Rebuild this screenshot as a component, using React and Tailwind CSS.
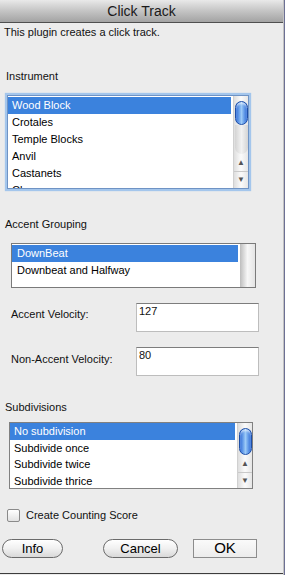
import React from "react";

const instruments = ["Wood Block", "Crotales", "Temple Blocks", "Anvil", "Castanets", "Claves"];
const groupings = ["DownBeat", "Downbeat and Halfway"];
const subdivisions = ["No subdivision", "Subdivide once", "Subdivide twice", "Subdivide thrice"];

const Thumb = ({ h }) => (
  <div
    className="mx-auto w-[13px] rounded-full border border-[#1d4fa8] bg-gradient-to-r from-[#2a68d6] via-[#9ccaf7] to-[#2a68d6] shadow-[inset_0_2px_2px_rgba(255,255,255,0.6)]"
    style={{ height: h }}
  />
);

const Arrows = () => (
  <div className="flex flex-col text-[#555]">
    <div className="h-[17px] flex items-center justify-center text-[8px] leading-none">▲</div>
    <div className="h-[17px] flex items-center justify-center text-[8px] leading-none border-t border-[#c9c9c9]">▼</div>
  </div>
);

const Scrollbar = ({ padTop, thumbH }) => (
  <div className="w-[15px] h-full flex flex-col border-l border-[#d0d0d0] bg-gradient-to-r from-[#dedede] via-[#fbfbfb] to-[#e6e6e6]">
    <div className="flex-1 flex flex-col" style={{ paddingTop: padTop }}>
      <Thumb h={thumbH} />
      <div className="mx-auto w-[13px] flex-1 rounded-b-full bg-gradient-to-r from-[#d4d4d4] via-[#f2f2f2] to-[#d4d4d4]" />
    </div>
    <Arrows />
  </div>
);

const Row = ({ label, selected, h, pl }) => (
  <div
    className={`flex items-center whitespace-nowrap ${selected ? "bg-[#3b82dd] text-white mr-[2px]" : "text-black"}`}
    style={{ height: h, paddingLeft: pl }}
  >
    {label}
  </div>
);

const VelocityRow = ({ label, value, labelTop }) => (
  <div className="flex items-start">
    <div className="w-[136px] pl-[11px] leading-[14px]" style={{ marginTop: labelTop }}>
      {label}
    </div>
    <div className="w-[123px] h-[29px] bg-white border border-[#bdbdbd] border-t-[#7d7d7d] pl-[2px] leading-[14px]">
      {value}
    </div>
  </div>
);

const PillButton = ({ children, className }) => (
  <div
    className={`h-[19px] flex items-center justify-center rounded-full border border-[#6a6a6a] bg-gradient-to-b from-[#ffffff] via-[#f0f0f0] to-[#d9d9d9] text-[13px] text-black ${className}`}
  >
    {children}
  </div>
);

export default function App() {
  return (
    <div className="w-[285px] h-[575px] flex bg-[#ececec] font-['Liberation_Sans',Arial,sans-serif] text-[11px] text-[#111] overflow-hidden">
      <div className="w-[283px] h-[574px] flex flex-col border-b border-[#3c3c3c]">
        <div className="h-[23px] flex items-center justify-center border-b border-[#4f4f4f] bg-gradient-to-b from-[#e9e9e9] via-[#c4c4c4] to-[#a3a3a3] text-[14px] text-[#1a1a1a]">
          Click Track
        </div>

        <div className="mt-[2px] pl-[4px] leading-[14px]">This plugin creates a click track.</div>

        <div className="mt-[30px] pl-[6px] leading-[14px]">Instrument</div>

        <div className="mt-[12px] ml-[7px] w-[242px] h-[94px] flex border border-[#6f93c4] bg-white shadow-[0_0_1px_2px_#a4c6ec]">
          <div className="flex-1 pt-px overflow-hidden">
            {instruments.map((item, i) => (
              <Row key={item} label={item} selected={i === 0} h={17} pl={4} />
            ))}
          </div>
          <Scrollbar padTop={5} thumbH={24} />
        </div>

        <div className="mt-[28px] pl-[5px] leading-[14px]">Accent Grouping</div>

        <div className="mt-[12px] ml-[11px] w-[245px] h-[45px] flex border border-[#7a7a7a] bg-white">
          <div className="flex-1 pt-px overflow-hidden">
            {groupings.map((item, i) => (
              <Row key={item} label={item} selected={i === 0} h={17} pl={5} />
            ))}
          </div>
          <div className="w-[15px] h-full bg-gradient-to-r from-[#bdbdbd] via-[#f7f7f7] to-[#e4e4e4]" />
        </div>

        <div className="mt-[15px]">
          <VelocityRow label="Accent Velocity:" value="127" labelTop={4} />
        </div>
        <div className="mt-[15px]">
          <VelocityRow label="Non-Accent Velocity:" value="80" labelTop={5} />
        </div>

        <div className="mt-[24px] pl-[5px] leading-[14px]">Subdivisions</div>

        <div className="mt-[8px] ml-[9px] w-[244px] h-[67px] flex border border-[#808080] bg-white">
          <div className="flex-1 overflow-hidden">
            {subdivisions.map((item, i) => (
              <Row key={item} label={item} selected={i === 0} h={16.7} pl={4} />
            ))}
          </div>
          <Scrollbar padTop={5} thumbH={27} />
        </div>

        <div className="mt-[19px] flex items-center">
          <div className="ml-[7px] w-[13px] h-[13px] rounded-[2px] border border-[#8a8a8a] bg-gradient-to-b from-[#ffffff] to-[#e2e2e2]" />
          <div className="ml-[6px] leading-[14px]">Create Counting Score</div>
        </div>

        <div className="mt-[17px] flex items-center">
          <PillButton className="ml-[2px] w-[61px]">Info</PillButton>
          <PillButton className="ml-[40px] w-[75px]">Cancel</PillButton>
          <div className="ml-[15px] w-[64px] h-[19px] flex items-center justify-center border border-[#8c8c8c] bg-gradient-to-b from-[#fafafa] to-[#ececec] text-[15px] text-black">
            OK
          </div>
        </div>
      </div>
      <div className="w-[2px] h-full flex">
        <div className="w-px h-full bg-[#c2c2c2]" />
        <div className="w-px h-full bg-[#6c7094]" />
      </div>
    </div>
  );
}
